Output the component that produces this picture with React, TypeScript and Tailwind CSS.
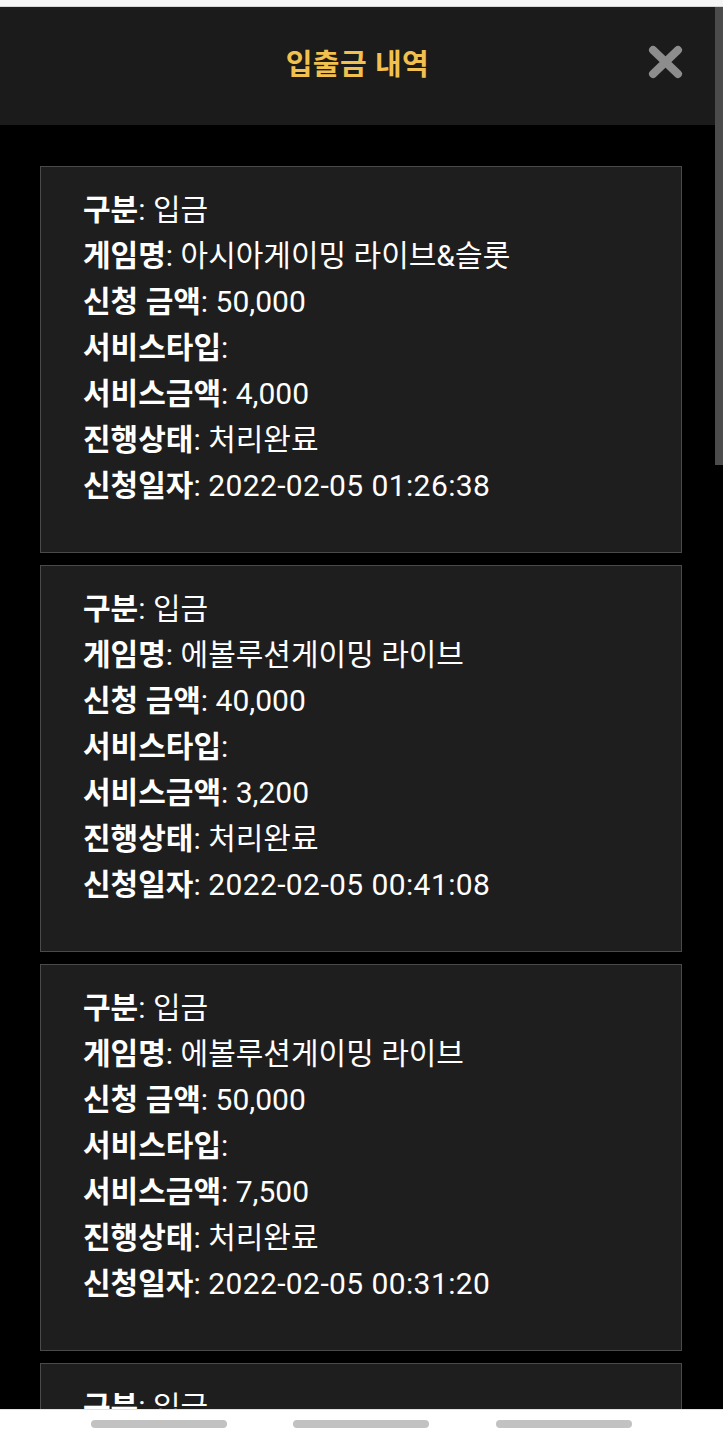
import React from "react";

type Item = {
  game: string;
  amount: string;
  service: string;
  date: string;
};

const items: Item[] = [
  { game: "아시아게이밍 라이브&슬롯", amount: "50,000", service: "4,000", date: "2022-02-05 01:26:38" },
  { game: "에볼루션게이밍 라이브", amount: "40,000", service: "3,200", date: "2022-02-05 00:41:08" },
  { game: "에볼루션게이밍 라이브", amount: "50,000", service: "7,500", date: "2022-02-05 00:31:20" },
  { game: "에볼루션게이밍 라이브", amount: "30,000", service: "3,000", date: "2022-02-04 23:10:02" },
];

function Row({ label, value, wide }: { label: string; value: string; wide?: boolean }) {
  return (
    <div className="h-[46px] leading-[46px] whitespace-nowrap">
      <span className="font-bold">{label}</span>
      <span className="font-normal">: </span>
      <span className={wide ? "font-normal tracking-[0.4px]" : "font-normal"}>{value}</span>
    </div>
  );
}

function Card({ item }: { item: Item }) {
  return (
    <div className="shrink-0 border border-[#4a4a4a] bg-[#1e1e1e] pl-[42px] pt-[20px] pb-[43px] text-[30px] text-white">
      <Row label="구분" value="입금" />
      <Row label="게임명" value={item.game} />
      <Row label="신청 금액" value={item.amount} />
      <Row label="서비스타입" value="" />
      <Row label="서비스금액" value={item.service} />
      <Row label="진행상태" value="처리완료" />
      <Row label="신청일자" value={item.date} wide />
    </div>
  );
}

export default function App() {
  return (
    <div
      className="w-[723px] h-[1439px] overflow-hidden flex flex-col bg-black"
      style={{ fontFamily: "Roboto, 'Noto Sans CJK KR', sans-serif" }}
    >
      <div className="h-[7px] shrink-0 bg-[#f5f5f5] border-b border-[#d6d6d6]" />
      <div className="flex-1 flex flex-row overflow-hidden">
        <div className="w-[715px] flex flex-col overflow-hidden">
          <div className="relative h-[118px] shrink-0 bg-[#1b1b1b] flex items-center justify-center">
            <span className="text-[29px] font-bold text-[#f2c04e] tracking-[0.5px]">입출금 내역</span>
            <svg
              className="absolute left-[647px] top-[37px]"
              width="37"
              height="36"
              viewBox="0 0 37 36"
            >
              <path d="M6 6 L31 30 M31 6 L6 30" stroke="#8d8d8d" strokeWidth="8" strokeLinecap="round" />
            </svg>
          </div>
          <div className="flex-1 flex flex-col gap-[12px] pt-[41px] pl-[40px] pr-[33px] overflow-hidden">
            {items.map((it, i) => (
              <Card key={i} item={it} />
            ))}
          </div>
        </div>
        <div className="w-[8px] shrink-0 bg-black">
          <div className="h-[458px] bg-[#4b4b4b]" />
        </div>
      </div>
      <div className="h-[30px] shrink-0 bg-white border-t border-[#e2e2e2] flex items-start pt-[10px]">
        <div className="ml-[91px] w-[136px] h-[8px] rounded-full bg-[#c2c2c2]" />
        <div className="ml-[66px] w-[136px] h-[8px] rounded-full bg-[#c2c2c2]" />
        <div className="ml-[67px] w-[136px] h-[8px] rounded-full bg-[#c2c2c2]" />
      </div>
    </div>
  );
}
